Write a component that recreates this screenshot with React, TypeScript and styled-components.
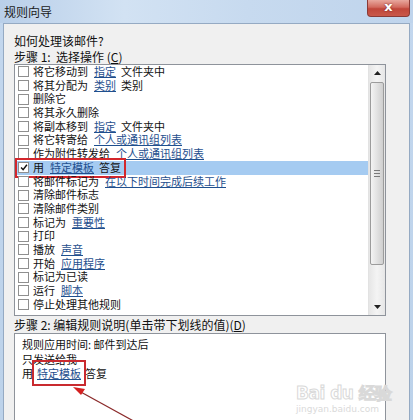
import React from "react";
import styled, { createGlobalStyle } from "styled-components";

const GlobalStyle = createGlobalStyle`
  html, body {
    margin: 0;
    padding: 0;
    background: #ffffff;
  }
  body {
    font-family: "Noto Sans CJK SC", "Liberation Sans", sans-serif;
  }
`;

type Action = {
  pre: string;
  link?: string;
  post?: string;
  checked?: boolean;
};

const actions: Action[] = [
  { pre: "将它移动到", link: "指定", post: "文件夹中" },
  { pre: "将其分配为", link: "类别", post: "类别" },
  { pre: "删除它" },
  { pre: "将其永久删除" },
  { pre: "将副本移到", link: "指定", post: "文件夹中" },
  { pre: "将它转寄给", link: "个人或通讯组列表" },
  { pre: "作为附件转发给", link: "个人或通讯组列表" },
  { pre: "用", link: "特定模板", post: "答复", checked: true },
  { pre: "将邮件标记为", link: "在以下时间完成后续工作" },
  { pre: "清除邮件标志" },
  { pre: "清除邮件类别" },
  { pre: "标记为", link: "重要性" },
  { pre: "打印" },
  { pre: "播放", link: "声音" },
  { pre: "开始", link: "应用程序" },
  { pre: "标记为已读" },
  { pre: "运行", link: "脚本" },
  { pre: "停止处理其他规则" },
];

function ActionText({ a }: { a: Action }) {
  return (
    <RowText>
      {a.pre}
      {a.link && <Link>{a.link}</Link>}
      {a.post}
    </RowText>
  );
}

function App() {
  return (
    <>
      <GlobalStyle />
      <Window>
        <TitleBar>
          <Title>规则向导</Title>
          <CloseButton>x</CloseButton>
        </TitleBar>
        <Body>
          <Label>如何处理该邮件?</Label>
          <Label>
            步骤 1:&nbsp;&nbsp;选择操作&nbsp;(<u>C</u>)
          </Label>
          <ListBox>
            <Rows>
              {actions.map((a, i) => (
                <Row key={i} selected={!!a.checked}>
                  {a.checked ? (
                    <Annotated>
                      <Checkbox>
                        <svg width="11" height="11" viewBox="0 0 11 11">
                          <path
                            d="M1.5 5.5 L4.3 8.5 L9.5 1.8"
                            fill="none"
                            stroke="#111"
                            strokeWidth="2"
                          />
                        </svg>
                      </Checkbox>
                      <ActionText a={a} />
                    </Annotated>
                  ) : (
                    <>
                      <Checkbox />
                      <ActionText a={a} />
                    </>
                  )}
                </Row>
              ))}
            </Rows>
            <ScrollBar>
              <ArrowButton>
                <svg width="7" height="4" viewBox="0 0 7 4">
                  <path d="M0 4 L3.5 0 L7 4 Z" fill="#222" />
                </svg>
              </ArrowButton>
              <Track>
                <Thumb>
                  <Grip />
                </Thumb>
              </Track>
              <ArrowButton>
                <svg width="7" height="4" viewBox="0 0 7 4">
                  <path d="M0 0 L3.5 4 L7 0 Z" fill="#222" />
                </svg>
              </ArrowButton>
            </ScrollBar>
          </ListBox>
          <StepLabel>
            步骤 2:&nbsp;编辑规则说明(单击带下划线的值)(<u>D</u>)
          </StepLabel>
          <Description>
            <DescLine>规则应用时间:&nbsp;邮件到达后</DescLine>
            <DescLine>只发送给我</DescLine>
            <DescLine>
              用<Marked>特定模板</Marked>答复
            </DescLine>
            <ArrowMark width="200" height="100" viewBox="0 0 200 100">
              <line x1="124" y1="90" x2="64" y2="57" stroke="#8b2a2a" strokeWidth="1.2" />
              <path d="M58 53 L70 55 L66 61 Z" fill="#d42020" />
            </ArrowMark>
            <Watermark>
              <WatermarkBig>Bai du 经验</WatermarkBig>
              <WatermarkSmall>jingyan.baidu.com</WatermarkSmall>
            </Watermark>
          </Description>
        </Body>
      </Window>
    </>
  );
}

export default App;

const Window = styled.div`
  width: 413px;
  height: 420px;
  overflow: hidden;
  display: flex;
  flex-direction: column;
  background: linear-gradient(180deg, #c3d7ee 0%, #bcd2ea 100%);
`;

const TitleBar = styled.div`
  height: 23px;
  flex: none;
  display: flex;
  justify-content: space-between;
  align-items: flex-start;
  padding-left: 4px;
  background: linear-gradient(90deg, #b9cfe9 0%, #d2e2f3 30%, #c7daef 60%, #bfd4ec 100%);
`;

const Title = styled.div`
  font-size: 12px;
  line-height: 23px;
  color: #1a1a1a;
`;

const CloseButton = styled.div`
  width: 43px;
  height: 17px;
  margin-right: 3px;
  box-sizing: border-box;
  border: 1px solid #8a3a36;
  border-top: none;
  border-radius: 0 0 4px 4px;
  background: linear-gradient(180deg, #e8a89e 0%, #d26a5e 45%, #c0463a 55%, #c9584a 100%);
  color: #ffffff;
  font-family: "DejaVu Sans", sans-serif;
  font-weight: bold;
  font-size: 13px;
  line-height: 14px;
  text-align: center;
  text-shadow: 0 0 2px #6a1a1a;
`;

const Body = styled.div`
  flex: 1;
  min-height: 0;
  margin: 0 3px;
  box-sizing: border-box;
  border: 1px solid #95aac3;
  border-bottom: none;
  background: #f0f0f0;
  padding: 9px 23px 0 10px;
  display: flex;
  flex-direction: column;
  overflow: hidden;
`;

const Label = styled.div`
  font-size: 12px;
  line-height: 15.5px;
  color: #111;
  white-space: nowrap;
`;

const StepLabel = styled(Label)`
  margin-top: 1px;
  line-height: 16px;
`;

const ListBox = styled.div`
  height: 252px;
  flex: none;
  box-sizing: border-box;
  border: 1px solid #8e939b;
  background: #ffffff;
  display: flex;
`;

const Rows = styled.div`
  flex: 1;
  min-width: 0;
  display: flex;
  flex-direction: column;
`;

const Row = styled.div<{ selected: boolean }>`
  height: 13.7px;
  flex: none;
  display: flex;
  align-items: center;
  padding-left: 3px;
  background: ${(p) => (p.selected ? "#a5cbf1" : "transparent")};
`;

const Annotated = styled.span`
  display: inline-flex;
  align-items: center;
  outline: 2px solid #d3262c;
  outline-offset: 1px;
  padding-right: 2px;
`;

const Checkbox = styled.span`
  width: 11px;
  height: 11px;
  box-sizing: border-box;
  border: 1px solid #8f8f8f;
  background: #ffffff;
  flex: none;
  display: flex;
  align-items: center;
  justify-content: center;
  svg {
    margin-left: 1px;
  }
`;

const RowText = styled.span`
  margin-left: 4px;
  font-size: 11px;
  line-height: 13.7px;
  color: #111;
  white-space: nowrap;
`;

const Link = styled.span`
  color: #1f4f8e;
  text-decoration: underline;
  margin: 0 5px 0 6px;
`;

const ScrollBar = styled.div`
  width: 16px;
  flex: none;
  display: flex;
  flex-direction: column;
  background: linear-gradient(90deg, #e6e6e6, #f4f4f4 50%, #e6e6e6);
  border-left: 1px solid #e2e2e2;
`;

const ArrowButton = styled.div`
  height: 16px;
  flex: none;
  display: flex;
  align-items: center;
  justify-content: center;
`;

const Track = styled.div`
  flex: 1;
  padding: 1px 1px 0;
`;

const Thumb = styled.div`
  height: 183px;
  box-sizing: border-box;
  border: 1px solid #9c9c9c;
  border-radius: 2px;
  background: linear-gradient(90deg, #f4f4f4 0%, #e2e2e2 50%, #cfcfcf 100%);
  display: flex;
  align-items: center;
  justify-content: center;
`;

const Grip = styled.div`
  width: 6px;
  height: 7px;
  background: repeating-linear-gradient(180deg, #7a7a7a 0 1px, transparent 1px 3px);
`;

const Description = styled.div`
  flex: 1;
  position: relative;
  box-sizing: border-box;
  border: 1px solid #8e939b;
  border-bottom: none;
  background: #ffffff;
  padding: 3px 0 0 7px;
`;

const DescLine = styled.div`
  font-size: 11px;
  line-height: 14.5px;
  color: #111;
  white-space: nowrap;
`;

const Marked = styled.span`
  color: #1f4f8e;
  text-decoration: underline;
  margin: 0 4px 0 4px;
  outline: 2px solid #c92a2f;
  outline-offset: 3px;
`;

const ArrowMark = styled.svg`
  position: absolute;
  left: 0;
  top: 0;
  pointer-events: none;
`;

const Watermark = styled.div`
  position: absolute;
  left: 281px;
  top: 48px;
  font-family: "DejaVu Sans", sans-serif;
  white-space: nowrap;
  pointer-events: none;
`;

const WatermarkBig = styled.div`
  font-size: 17px;
  font-weight: bold;
  line-height: 22px;
  color: transparent;
  -webkit-text-stroke: 1px #d9d9d9;
  letter-spacing: -0.5px;
`;

const WatermarkSmall = styled.div`
  font-size: 9px;
  line-height: 11px;
  color: #dadada;
`;
